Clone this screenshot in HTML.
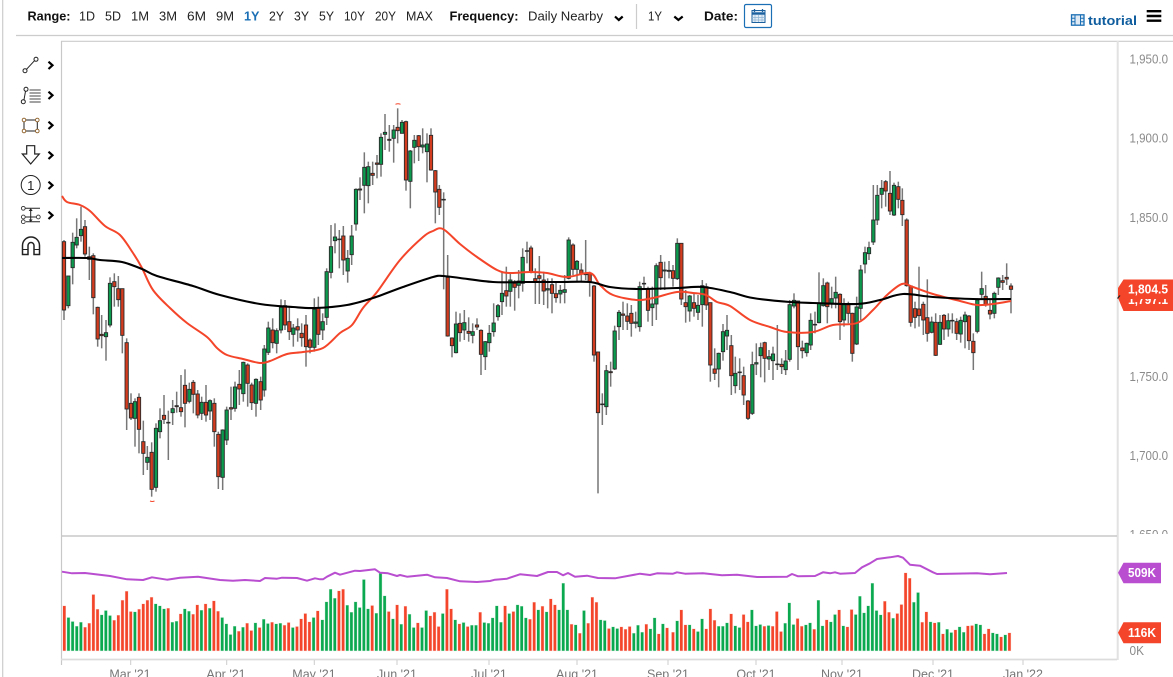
<!DOCTYPE html>
<html><head><meta charset="utf-8"><title>Chart</title>
<style>
html,body{margin:0;padding:0;background:#fff;width:1173px;height:677px;overflow:hidden}
svg{display:block;font-family:"Liberation Sans",Arial,sans-serif}
.t{font-size:12.5px;fill:#222}
.b{font-size:12.5px;font-weight:bold;fill:#111}
.a{font-size:12.5px;fill:#8a8a8a}
.l{font-size:12.5px;fill:#777}
.w{font-size:12.5px;font-weight:bold;fill:#fff}
.i{fill:none;stroke:#222;stroke-width:1}
.c{fill:none;stroke:#000;stroke-width:2.2}
</style></head><body>
<svg id="s" xmlns="http://www.w3.org/2000/svg" width="1173" height="677" viewBox="0 0 1173 677">
<defs>
<clipPath id="ax"><rect x="1120" y="42" width="53" height="492"/></clipPath>
<clipPath id="tg"><rect x="1118" y="299" width="55" height="12"/></clipPath>
</defs>
<rect width="1173" height="677" fill="#fff"/>
<!-- frame -->
<path d="M2.7 0V677" stroke="#ccc" stroke-width="1.2" fill="none"/>
<path d="M16 35.5H1173M61 41.3H1173" stroke="#ccc" stroke-width="1.2" fill="none"/>
<path d="M61.5 41V665" stroke="#c8c8c8" stroke-width="1.2" fill="none"/>
<path d="M1117.7 41V660" stroke="#e2e2e2" stroke-width="2" fill="none"/>
<path d="M61 536H1117" stroke="#c8c8c8" stroke-width="1.6" fill="none"/>
<path d="M61 659.5H1117" stroke="#dcdcdc" stroke-width="1.8" fill="none"/>
<path d="M130.7 660v5M226.7 660v5M314.3 660v5M397 660v5M489 660v5M577 660v5M668 660v5M756 660v5M842 660v5M933 660v5M1023 660v5" stroke="#ccc" stroke-width="1" fill="none"/>
<!-- toolbar -->
<text class="b" x="27.5" y="20.5" textLength="43" lengthAdjust="spacingAndGlyphs">Range:</text>
<text class="t" x="79" y="20.5" textLength="16" lengthAdjust="spacingAndGlyphs">1D</text>
<text class="t" x="105" y="20.5" textLength="16" lengthAdjust="spacingAndGlyphs">5D</text>
<text class="t" x="131" y="20.5" textLength="18" lengthAdjust="spacingAndGlyphs">1M</text>
<text class="t" x="159" y="20.5" textLength="18" lengthAdjust="spacingAndGlyphs">3M</text>
<text class="t" x="187" y="20.5" textLength="19" lengthAdjust="spacingAndGlyphs">6M</text>
<text class="t" x="216" y="20.5" textLength="18" lengthAdjust="spacingAndGlyphs">9M</text>
<text class="t" x="244" y="20.5" textLength="15.5" lengthAdjust="spacingAndGlyphs" style="fill:#1a6fb5;font-weight:bold">1Y</text>
<text class="t" x="269" y="20.5" textLength="15" lengthAdjust="spacingAndGlyphs">2Y</text>
<text class="t" x="294" y="20.5" textLength="15" lengthAdjust="spacingAndGlyphs">3Y</text>
<text class="t" x="319" y="20.5" textLength="15" lengthAdjust="spacingAndGlyphs">5Y</text>
<text class="t" x="344" y="20.5" textLength="21" lengthAdjust="spacingAndGlyphs">10Y</text>
<text class="t" x="375" y="20.5" textLength="21" lengthAdjust="spacingAndGlyphs">20Y</text>
<text class="t" x="406" y="20.5" textLength="27" lengthAdjust="spacingAndGlyphs">MAX</text>
<text class="b" x="449.5" y="20.5" textLength="69" lengthAdjust="spacingAndGlyphs">Frequency:</text>
<text class="t" x="528" y="20.5" textLength="75" lengthAdjust="spacingAndGlyphs">Daily Nearby</text>
<path class="c" d="M615 16.5L618.8 20L622.7 16.5"/>
<path d="M636.5 4V29" stroke="#ccc" stroke-width="1.2" fill="none"/>
<text class="t" x="648" y="20.5" textLength="14" lengthAdjust="spacingAndGlyphs">1Y</text>
<path class="c" d="M674.3 16.5L678.4 20L682.7 16.5"/>
<text class="b" x="704" y="20.5" textLength="34" lengthAdjust="spacingAndGlyphs">Date:</text>
<rect x="744.5" y="4.5" width="27" height="23" rx="1.5" fill="#fff" stroke="#1a6fb5" stroke-width="1.2"/>
<rect x="752" y="10.5" width="13" height="12" fill="#e3edf6" stroke="#1a5f9e" stroke-width="1"/>
<path d="M752 13.5H765" stroke="#1a5f9e" stroke-width="2.4" fill="none"/>
<path d="M755 15V22M758.5 15V22M762 15V22M752 17.5H765M752 20H765" stroke="#8fb4d4" stroke-width=".7" fill="none"/>
<path d="M754.5 9V12M762.5 9V12" stroke="#1a5f9e" stroke-width="1.3" fill="none"/>
<!-- tutorial -->
<rect x="1071.5" y="14.8" width="12.5" height="10.4" fill="#dfeaf4" stroke="#1a6fb5" stroke-width="1.3"/>
<path d="M1075 15V25M1080.5 15V25M1071.5 18.3H1075M1071.5 21.7H1075M1080.5 18.3H1084M1080.5 21.7H1084" stroke="#1a6fb5" stroke-width="1" fill="none"/>
<text x="1088" y="25" font-size="13" font-weight="bold" fill="#0f5d9e" textLength="49" lengthAdjust="spacingAndGlyphs">tutorial</text>
<path d="M1146.7 11.2H1161.3M1146.7 16H1161.3M1146.7 20.7H1161.3" stroke="#000" stroke-width="2.4" fill="none"/>
<!-- left tools -->
<path class="i" d="M26.5 69.3L34.5 60.7"/><circle class="i" cx="25" cy="70.7" r="2"/><circle class="i" cx="36" cy="59.3" r="2"/>
<path class="i" d="M24 99.7L25.5 91.3"/><circle class="i" cx="23.3" cy="101.7" r="2"/><circle class="i" cx="26" cy="89.3" r="2"/>
<path d="M29.5 90H40.7M29.5 93H40.7M29.5 96H40.7M29.5 99H40.7M29.5 102H40.7" stroke="#444" stroke-width="1" fill="none"/>
<path class="i" d="M24 120H37.3V131H24Z"/>
<g fill="#fff" stroke="#8a5a20" stroke-width=".9"><circle cx="24" cy="120" r="1.8"/><circle cx="37.3" cy="120" r="1.8"/><circle cx="24" cy="131" r="1.8"/><circle cx="37.3" cy="131" r="1.8"/></g>
<path d="M26.7 145.7H34.7V154H39.3L30.7 164L22.3 154H26.7Z" fill="none" stroke="#222" stroke-width="1.2"/>
<circle class="i" cx="30.7" cy="185" r="9.5"/>
<text x="30.7" y="190" font-size="13" fill="#222" text-anchor="middle">1</text>
<path class="i" d="M23 208.3H40M23 217H40M26 221.7H40M30.7 209V221"/>
<path d="M28.7 211L30.7 208.3L32.7 211ZM28.7 219.5L30.7 222L32.7 219.5Z" fill="#222"/>
<g fill="#fff" stroke="#333" stroke-width=".9"><circle cx="23.3" cy="208.3" r="1.9"/><circle cx="23.3" cy="217" r="1.9"/><circle cx="23.3" cy="221.7" r="1.9"/><circle cx="38.3" cy="217" r="1.9"/></g>
<path d="M22.5 254.5V245.5A8.5 8.5 0 0 1 39.5 245.5V254.5H34V245.5A3 3 0 0 0 28 245.5V254.5Z" fill="none" stroke="#222" stroke-width="1.5"/>
<path d="M22.5 249.5H28M34 249.5H39.5" stroke="#222" stroke-width="1.1" fill="none"/>
<path class="c" d="M48.5 61.7L52.5 65.3L48.5 69"/>
<path class="c" d="M48.5 91.7L52.5 95.3L48.5 99"/>
<path class="c" d="M48.5 121.7L52.5 125.3L48.5 129"/>
<path class="c" d="M48.5 151.7L52.5 155.3L48.5 159"/>
<path class="c" d="M48.5 181.7L52.5 185.3L48.5 189"/>
<path class="c" d="M48.5 211.7L52.5 215.3L48.5 219"/>
<!-- charts -->
<g id="vol"></g>
<g id="wick" stroke="#777" stroke-width="1.5" fill="none"></g>
<path d="M395.5 104.3q2.5-1 5 0M150 501q2.200 1 4.500 0" stroke="#f4452a" stroke-width="1" fill="none"/>
<g id="body" stroke="#2a2a2a" stroke-width=".9"></g>
<path id="redl" fill="none" stroke="#f4452a" stroke-width="2" stroke-linejoin="round"/>
<path id="blkl" fill="none" stroke="#000" stroke-width="2.1" stroke-linejoin="round"/>
<polyline fill="none" stroke="#b94fd0" stroke-width="2" stroke-linejoin="round" points="62,571.7 72,573.3 85,573 110,576 127,579.3 143,580 152,577.3 167,579.7 180,577.7 198,576.7 220,580 233,580.7 245,580 260,581 265,578 277,578.7 282,577.7 297,578 307,580.7 315,578.3 320,579.3 323,579.3 327,576.7 335,572.7 340,574.7 355,570.7 360,571 375,569.3 380,572.7 388,573.3 397,576 400,575 407,576.7 427,574.7 435,577.3 447,578 460,581.3 477,582 490,581 495,579.7 507,578.7 520,574.3 537,576 548,572 557,572 563,575.3 568,573 575,576.7 587,575.7 598,578 615,578.3 640,573.7 650,575 657,573.3 673,573.7 677,572.3 685,573.7 703,573.3 722,575.3 737,574.7 757,577 787,576.7 792,574 798,576.3 815,576 823,572.3 830,573.3 835,572.3 840,573.7 855,573 862,567.3 870,563.3 877,559 890,557.3 898,556 903,557.7 910,564.7 920,565.7 933,572.3 937,574 977,573.3 990,574.3 1007,573"/>
<!-- axis labels -->
<text class="a" x="1129.5" y="63.5" textLength="38.5" lengthAdjust="spacingAndGlyphs">1,950.0</text>
<text class="a" x="1129.5" y="142.5" textLength="38.5" lengthAdjust="spacingAndGlyphs">1,900.0</text>
<text class="a" x="1129.5" y="222" textLength="38.5" lengthAdjust="spacingAndGlyphs">1,850.0</text>
<text class="a" x="1129.5" y="381" textLength="38.5" lengthAdjust="spacingAndGlyphs">1,750.0</text>
<text class="a" x="1129.5" y="460" textLength="38.5" lengthAdjust="spacingAndGlyphs">1,700.0</text>
<g clip-path="url(#ax)"><text class="a" x="1129.5" y="539" textLength="38.5" lengthAdjust="spacingAndGlyphs">1,650.0</text></g>
<text class="a" x="1129.5" y="655" textLength="14.5" lengthAdjust="spacingAndGlyphs">0K</text>
<!-- x labels -->
<g text-anchor="middle">
<text class="l" x="130" y="678.5">Mar '21</text><text class="l" x="226" y="678.5">Apr '21</text><text class="l" x="314" y="678.5">May '21</text><text class="l" x="397" y="678.5">Jun '21</text><text class="l" x="489" y="678.5">Jul '21</text><text class="l" x="577" y="678.5">Aug '21</text><text class="l" x="668" y="678.5">Sep '21</text><text class="l" x="756" y="678.5">Oct '21</text><text class="l" x="842" y="678.5">Nov '21</text><text class="l" x="933" y="678.5">Dec '21</text><text class="l" x="1023" y="678.5">Jan '22</text>
</g>
<!-- tags -->
<path d="M1118 288L1123.5 279.5H1173V311H1123.5L1118 298Z" fill="#f4452a"/>
<g clip-path="url(#tg)"><text class="w" x="1128" y="304" textLength="40" lengthAdjust="spacingAndGlyphs">1,797.1</text></g>
<path d="M1117.5 298.5L1120 295.5" stroke="#222" stroke-width="1.2" fill="none"/>
<text class="w" x="1128" y="293.5" textLength="40" lengthAdjust="spacingAndGlyphs">1,804.5</text>
<path d="M1118 572.7L1123.5 562.7H1161V583.3H1123.5Z" fill="#b94fd0"/>
<text class="w" x="1128" y="577.2" textLength="28" lengthAdjust="spacingAndGlyphs">509K</text>
<path d="M1118 632.7L1123.5 622.3H1161V643.3H1123.5Z" fill="#f4452a"/>
<text class="w" x="1128" y="637.2" textLength="28" lengthAdjust="spacingAndGlyphs">116K</text>
</svg>
<script>
var NS="http://www.w3.org/2000/svg";
function el(p,n,a){var e=document.createElementNS(NS,n);for(var k in a)e.setAttribute(k,a[k]);p.appendChild(e);}
var G="#0aa84f",R="#f4452a",CG="#0c9a4e",CR="#d33c1e";
var vol=document.getElementById("vol"),wick=document.getElementById("wick"),body=document.getElementById("body");
function V(x,h,c){el(vol,"rect",{x:(x-1.3).toFixed(2),y:(650.7-h).toFixed(2),width:2.6,height:h.toFixed(2),fill:c=="g"?G:R,stroke:c=="g"?G:R,"stroke-opacity":.25,"stroke-width":.8});}
var A="258r 293g 305g 319g 307g 322r 310r 224r 268r 285g 272g 287g 301r 286r 241r 214r 275r 276g 268r 252r 241r 232r 252g 258g 267g 265r 307g 304g 282r 267g 274g 283r 255r 271g 252r 265g 243r 274r 293g 312g 344g 319g 334r 322g 310r 332r 309g 323r 298g 311g 307r 312g 310g 316r 308r 323g 320r 297r 281r 306r 293g 273r".split(" ");
A.forEach(function(s,i){V(64.3+4.155*i,(392-parseInt(s))/3,s.slice(-1));});
var B="240g 186g 148g 175g 153r 148r 196g 217g 186g 203g 119g 207g 197r 220g 100g 168g 215r 237g 195r 253g 199r 223g 263g 249r 263g 212g 228r 217r 260r 221g 148r 207r 240g 252r 248g 260r 256g 256g 217r 248g 250g 234g 198g 247g 198r 221g 215r 195g 199g 234g 238r 187r 210g 199r 216g 177r 195r 210g 130g 210g 253r 255g 280r 212g 250r 172r 187r 240g 242g 266r 261g 266g 261r 268r 260r 280g 256g 277g 253r 267g 234g 282r 252g 264r".split(" ");
B.forEach(function(s,i){V(320+(7+12.46*i)/3,(332-parseInt(s))/3,s.slice(-1));});
var C="277r 243g 210r 255r 255g 267r 275g 237g 267r 207r 241r 259g 259g 249g 222r 258g 263g 224r 246r 210g 258g 254g 259r 257g 259r 215r 275r 250g 189g 254g 236r 259r 255g 249g 268r 181g 258g 240r 246g 224g 210r 258g 261r 209r 224g 169g 219g 198g 130g 212g 225g 184r 217r 235g 221r 194r 99r 115r 187g 158g 247r 216r 246g 249r 247g 282r 268g 278g 270r 261g 277g 258r 257r 252g 255g 282r 267r 279g 282g 291r 285g 279r".split(" ");
C.forEach(function(s,i){V(660+(39+12.46*i)/3,(332-parseInt(s))/3,s.slice(-1));});
function K(X0,Y0,str){str.trim().split(/\s*\|\s*/).forEach(function(r){
 var p=r.split(/\s+/),x=X0+p[0]/3,c=p[1],bt=Y0+p[2]/3,bb=Y0+p[3]/3,wt=Y0+p[4]/3,wb=Y0+p[5]/3;
 el(wick,"line",{x1:x.toFixed(2),x2:x.toFixed(2),y1:wt.toFixed(2),y2:wb.toFixed(2)});
 el(body,"rect",{x:(x-1.65).toFixed(2),y:bt.toFixed(2),width:3.3,height:Math.max(bb-bt,.6).toFixed(2),fill:c=="g"?CG:CR});
});}
K(60,190,"12 r 155 360 150 390|25 g 258 347 258 355|38 g 157 233 128 283|50 g 142 165 85 175|63 g 118 137 50 155|75 r 110 192 90 200|88 r 200 208 170 270|100 r 197 323 190 373|113 r 352 447 350 470|125 r 433 437 375 475|138 g 428 440 390 512|150 g 280 405 262 412|163 r 275 290 250 350|175 r 296 329 258 350|187 r 296 436 296 490|200 r 458 657 445 720|213 r 640 684 610 690|225 g 635 685 625 770|237 r 622 718 610 790|250 r 755 790 692 855|262 g 802 817 768 840|275 r 787 898 757 920|288 g 715 892 700 905|300 g 692 725 655 745|312 r 676 688 615 702|325 r 697 699 662 810|338 g 656 668 630 705|350 r 647 650 605 668|363 r 653 665 555 680|375 r 586 640 538 712|388 g 598 634 578 640|400 r 577 613 570 670|413 r 612 675 600 685|425 g 637 670 620 690|438 r 637 675 585 695|450 g 632 663 628 690|463 r 640 725 625 770|475 r 733 860 725 897|488 g 720 862 718 900|500 g 660 750 650 765|513 r 653 657 590 690|525 g 591 655 575 665|538 r 583 597 540 645|550 g 517 611 515 635|563 r 525 580 520 650|575 r 585 638 578 660|588 g 568 640 565 680");
K(260,100,"2 r 845 900 830 930|13 g 747 870 735 890|25 g 684 757 665 765|38 r 690 728 655 745|50 g 692 730 685 760|63 g 622 690 598 700|75 r 617 675 600 690|88 r 665 695 620 720|100 g 684 703 672 740|113 r 680 690 655 725|125 r 700 713 670 740|138 r 675 740 645 800|150 r 720 742 715 760|163 g 628 742 595 755|175 r 623 703 590 735|188 g 665 690 640 720|200 g 515 652 505 675|213 g 440 517 375 535|225 g 411 422 370 460|238 r 417 419 390 505|250 r 408 480 378 525|263 g 475 513 450 548|275 g 408 464 375 495|288 g 268 372 265 392|300 r 267 270 232 300|313 g 202 256 157 340|325 g 200 257 185 310|338 r 220 226 185 255|351 r 189 193 165 235|363 g 112 193 100 230|375 g 97 103 42 150|388 r 118 121 75 155|401 g 90 115 75 188|413 r 82 92 25 130|426 g 67 100 60 100|438 r 65 240 62 272|451 g 153 244 150 325|463 g 121 142 105 190|476 r 107 140 105 183|488 g 135 141 85 160|501 g 132 155 100 247|513 r 106 210 85 212|526 r 212 276 210 370|538 r 268 322 255 345|551 r 298 300 277 568|563 r 532 708 465 710|576 r 714 737 712 772|588 g 672 758 635 760");
K(460,230,"0 r 280 308 250 335|13 g 278 300 240 330|26 r 304 310 262 335|38 g 305 316 280 340|51 r 285 291 265 300|63 r 301 373 298 435|76 g 335 380 333 420|88 g 310 338 285 365|101 g 279 305 220 320|114 g 227 260 222 272|126 g 190 215 127 255|139 r 182 198 110 230|151 g 150 184 130 230|164 r 160 172 150 242|176 g 153 166 120 205|188 g 82 160 55 185|201 r 62 64 35 100|213 r 54 127 47 130|226 r 146 155 115 222|238 r 137 145 78 222|251 r 150 183 125 225|263 g 176 180 145 235|276 r 164 190 145 250|288 r 191 203 155 218|301 g 181 192 165 220|314 g 179 187 135 220|326 g 30 145 22 148|339 r 45 118 40 135|351 g 94 118 90 155|364 r 120 132 100 155|377 r 132 134 30 150|389 r 130 155 125 200|402 r 168 375 165 395|414 r 366 548 365 790|427 r 522 524 490 585|439 g 422 530 405 555|452 r 425 428 395 470|464 g 303 417 287 420|477 g 247 290 240 330|489 r 252 256 215 300|502 r 258 274 220 300|514 r 250 280 225 320|527 g 276 280 245 295|539 g 170 290 155 305|552 r 160 162 140 180|564 r 176 241 170 275|577 g 222 233 170 288|589 g 107 222 100 270|602 r 97 143 75 180|614 g 120 123 95 180|627 r 121 124 93 145|639 r 122 145 105 170|652 g 40 146 25 150|664 r 40 207 40 225|677 r 218 230 180 278|689 g 198 243 195 275|702 r 218 235 190 260|714 g 226 247 195 270|727 g 167 224 150 290|739 r 170 225 160 240");
K(700,170,"31 r 398 585 398 635|44 r 597 610 535 630|56 g 550 597 548 652|69 g 485 545 462 572|81 g 481 498 435 540|94 r 527 617 495 675|106 g 610 647 560 670|119 r 606 608 565 660|131 r 617 675 590 705|144 r 693 745 690 750|157 g 584 730 545 735|169 g 578 582 520 615|182 g 533 557 518 622|194 r 518 565 515 637|207 g 560 567 540 600|219 g 552 572 530 630|232 r 582 584 465 600|245 r 583 590 565 612|257 g 573 599 540 615|269 g 404 568 390 575|282 g 391 408 370 415|294 r 393 530 392 600|307 r 534 542 512 565|320 g 520 548 518 560|332 g 451 525 430 540|345 r 463 465 425 490|357 g 400 458 307 460|370 g 347 407 325 410|382 r 339 410 335 460|395 g 386 402 350 415|407 g 367 384 320 415|420 r 373 455 370 510|432 g 402 450 385 470|445 r 404 430 395 460|457 r 430 550 428 575|470 g 411 522 380 525|482 g 300 415 285 450|495 g 248 282 230 310|507 g 233 251 215 270|520 g 150 216 45 225|532 g 76 150 45 165|545 g 55 73 30 115|557 r 35 63 30 110|570 r 70 123 3 135|582 g 46 135 38 138|595 r 50 88 35 115|607 r 91 134 55 168|620 r 150 347 145 350|632 r 348 457 345 470|645 r 416 442 395 475|657 r 417 437 290 470|670 r 403 450 395 495|682 r 443 490 328 515|695 g 456 487 440 490|707 r 457 556 430 558|720 g 457 523 435 525|732 r 436 477 432 510|745 g 452 477 430 500|757 r 451 453 430 490|770 r 455 490 445 510|782 g 451 492 440 518|795 g 435 455 425 535|807 r 438 512 435 540|820 r 514 548 490 600|832 g 390 484 385 490|845 g 356 373 305 385|857 r 379 405 345 410|870 r 421 432 385 448|883 g 370 430 365 445|895 g 324 352 322 375|908 r 332 337 315 360|920 r 322 327 280 345|933 r 348 358 340 430");
function smooth(s){var p=s.split(" ").map(function(q){return q.split(",").map(Number);}),d="M"+p[0][0]+" "+p[0][1];
 for(var i=0;i<p.length-1;i++){var a=p[Math.max(i-1,0)],b=p[i],c=p[i+1],e=p[Math.min(i+2,p.length-1)];
  d+="C"+(b[0]+(c[0]-a[0])/6).toFixed(1)+" "+(b[1]+(c[1]-a[1])/6).toFixed(1)+" "+(c[0]-(e[0]-b[0])/6).toFixed(1)+" "+(c[1]-(e[1]-b[1])/6).toFixed(1)+" "+c[0]+" "+c[1];}
 return d;}
document.getElementById("redl").setAttribute("d",smooth("62,196 67,202 80,205 90,211 105,226 120,235 133,253 142,268 153,290 170,308 187,323 207,337 217,348 227,355 243,359 260,363 270,361 287,354 303,352 323,348 340,333 352,325 363,308 377,292 400,260 423,237 433,231 443,229 460,244 477,257 497,270 510,273 530,272 547,273 567,277 590,273 600,285 613,295 637,300 653,298 677,292 693,293 706,295 717,302 730,306 750,320 770,327 787,332 813,332 833,325 857,323 873,310 887,295 902,284 913,287 933,294 960,301 977,305 993,304 1011,301"));
document.getElementById("blkl").setAttribute("d",smooth("62,258 87,258 100,260 122,262 142,269 157,276 193,286 220,295 260,304 293,307 315,308 347,305 373,298 403,287 433,277 443,276 460,278 493,282 527,282 560,282 590,282 610,287 637,289 677,288 703,287 730,292 753,298 790,302 813,303 857,304 880,300 903,294 933,297 973,299 1011,299"));
</script>
</body></html>
